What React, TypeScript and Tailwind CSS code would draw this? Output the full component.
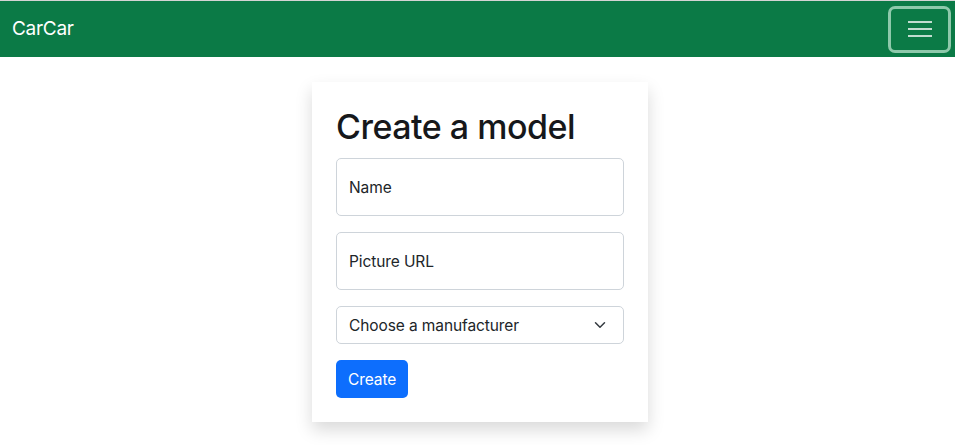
export default function App() {
  return (
    <div className="min-h-[445px] bg-white font-['Inter','Noto_Sans',sans-serif] text-[#212529]">
      <div className="h-px bg-[#d4d4d4]" />
      <nav className="flex h-[56px] items-center justify-between bg-[#0b7a46] pl-3 pr-[4px]">
        <span className="text-[19px] tracking-[-0.3px] text-white">CarCar</span>
        <button className="flex h-[47px] w-[63px] items-center justify-center rounded-[7px] border-[3px] border-[#8ec9ab]">
          <svg width="26" height="18" viewBox="0 0 26 18" fill="none" stroke="rgba(255,255,255,0.75)" strokeWidth="2">
            <path d="M1 2h24M1 9h24M1 16h24" />
          </svg>
        </button>
      </nav>
      <div className="flex justify-center pl-[5px] pt-[25px]">
        <div className="w-[336px] bg-white p-6 pt-[23px] shadow-[0_8px_16px_rgba(0,0,0,0.15)]">
          <h1 className="mb-[9px] text-[34px] font-medium leading-[1.3] tracking-[-0.5px] text-[#16181b]">Create a model</h1>
          <div className="mb-4 flex h-[58px] items-center rounded-[5px] border border-[#ced4da] px-3 pt-px text-[15.5px] tracking-[-0.1px]">
            Name
          </div>
          <div className="mb-4 flex h-[58px] items-center rounded-[5px] border border-[#ced4da] px-3 pt-px text-[15.5px] tracking-[-0.1px]">
            Picture URL
          </div>
          <div className="mb-4 flex h-[38px] items-center justify-between rounded-[5px] border border-[#ced4da] pl-3 pr-[17px] text-[15.5px] tracking-[-0.1px]">
            <span>Choose a manufacturer</span>
            <svg width="12" height="12" viewBox="0 0 16 16" fill="none" stroke="#343a40" strokeWidth="2" strokeLinecap="round" strokeLinejoin="round">
              <path d="m2 5 6 6 6-6" />
            </svg>
          </div>
          <button className="h-[38px] rounded-[5px] bg-[#0d6efd] px-3 text-[15.5px] tracking-[-0.1px] text-white">Create</button>
        </div>
      </div>
    </div>
  );
}
